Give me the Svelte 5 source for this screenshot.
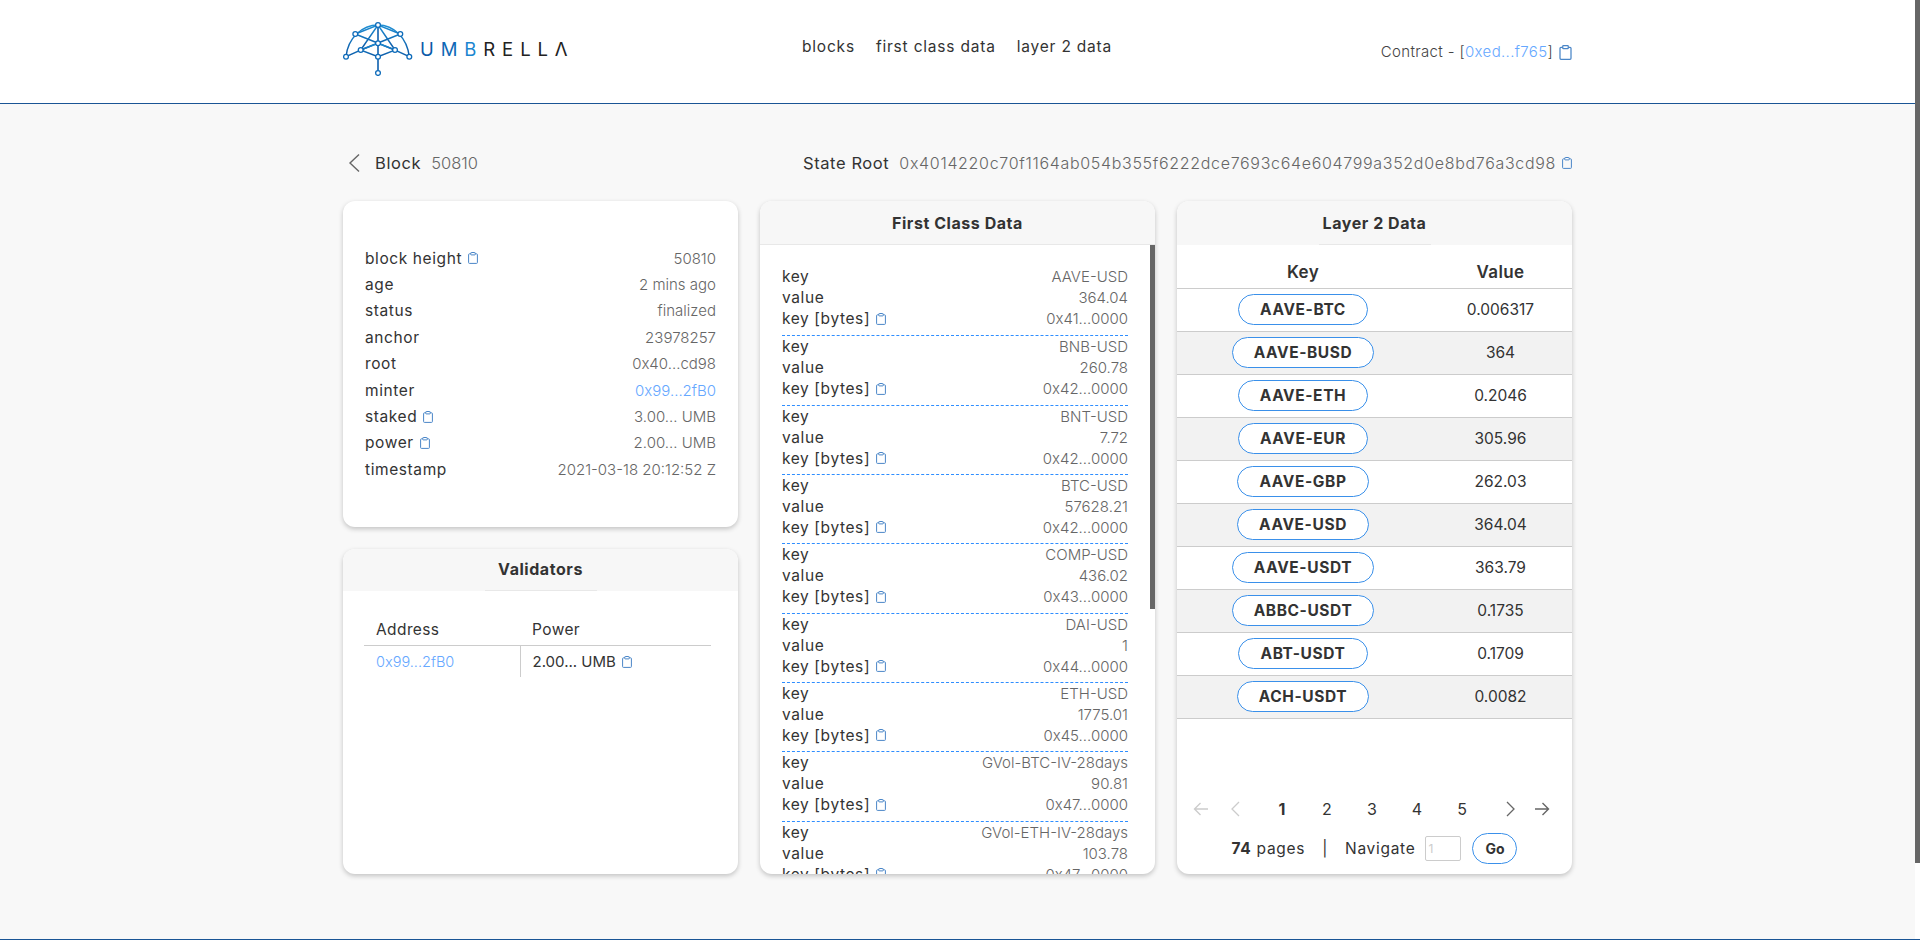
<script>
	const blockRows = [
		{ label: 'block height', value: '50810', copy: true },
		{ label: 'age', value: '2 mins ago' },
		{ label: 'status', value: 'finalized' },
		{ label: 'anchor', value: '23978257' },
		{ label: 'root', value: '0x40...cd98' },
		{ label: 'minter', value: '0x99...2fB0', link: true },
		{ label: 'staked', value: '3.00... UMB', copy: true },
		{ label: 'power', value: '2.00... UMB', copy: true },
		{ label: 'timestamp', value: '2021-03-18 20:12:52 Z' }
	];

	const firstClass = [
		['AAVE-USD', '364.04', '0x41...0000'],
		['BNB-USD', '260.78', '0x42...0000'],
		['BNT-USD', '7.72', '0x42...0000'],
		['BTC-USD', '57628.21', '0x42...0000'],
		['COMP-USD', '436.02', '0x43...0000'],
		['DAI-USD', '1', '0x44...0000'],
		['ETH-USD', '1775.01', '0x45...0000'],
		['GVol-BTC-IV-28days', '90.81', '0x47...0000'],
		['GVol-ETH-IV-28days', '103.78', '0x47...0000']
	];

	const layer2 = [
		['AAVE-BTC', '0.006317'],
		['AAVE-BUSD', '364'],
		['AAVE-ETH', '0.2046'],
		['AAVE-EUR', '305.96'],
		['AAVE-GBP', '262.03'],
		['AAVE-USD', '364.04'],
		['AAVE-USDT', '363.79'],
		['ABBC-USDT', '0.1735'],
		['ABT-USDT', '0.1709'],
		['ACH-USDT', '0.0082']
	];

	const nodes = [
		[378, 25], [355.3, 34], [400.3, 34], [378, 43.3], [360.7, 50],
		[395, 50], [346, 56.7], [409.3, 56.7], [378, 56.7], [378, 73]
	];
</script>

{#snippet copyIcon()}
	<svg class="copy" viewBox="0 0 10 12" width="10" height="12" aria-hidden="true">
		<rect x="0.6" y="1.8" width="8.8" height="9.6" rx="0.8" fill="none" stroke="currentColor" stroke-width="1" />
		<rect x="2.8" y="0.5" width="4.4" height="2.4" rx="0.5" fill="#fff" stroke="currentColor" stroke-width="1" />
	</svg>
{/snippet}

<div class="page">
	<header class="topbar">
		<div class="wrap topbar-inner">
			<a class="logo" href="#top">
				<svg viewBox="343 21 70 55" width="70" height="55" aria-hidden="true">
					<defs>
						<linearGradient id="umb" x1="0" y1="0" x2="0" y2="1">
							<stop offset="0" stop-color="#1f8fd4" />
							<stop offset="1" stop-color="#0a56a4" />
						</linearGradient>
					</defs>
					<g fill="none" stroke="url(#umb)" stroke-width="1.4">
						<path d="M346 56.7C348 38 362 25 378 25C394 25 407 38 409.3 56.7" />
						<path d="M355.3 34L378 25L400.3 34M378 25L360.7 50M378 25L395 50M355.3 34L395 50M400.3 34L360.7 50" />
						<path d="M346 56.7L360.7 50L378 56.7L395 50L409.3 56.7M360.7 50L378 43.3L395 50" />
					</g>
					<path d="M378 25V73" fill="none" stroke="#0d5fae" stroke-width="1.6" />
					{#each nodes as [cx, cy]}
						<circle {cx} {cy} r="2.4" fill="#fff" stroke="#0f6cba" stroke-width="1.3" />
					{/each}
				</svg>
				<span class="wordmark"><span class="w1">U</span><span class="w2">M</span><span class="w3">B</span>RELLΛ</span>
			</a>
			<nav class="nav">
				<a href="#top">blocks</a>
				<a href="#top">first class data</a>
				<a href="#top">layer 2 data</a>
			</nav>
			<div class="contract">
				<span>Contract - [<a href="#top">0xed...f765</a>]</span>
				<span class="copy-big">{@render copyIcon()}</span>
			</div>
		</div>
	</header>

	<main class="wrap content">
		<div class="crumbs">
			<div class="crumb-left">
				<svg viewBox="0 0 12 20" width="12" height="20" aria-hidden="true">
					<path d="M11 1.5L2 10l9 8.5" fill="none" stroke="#666" stroke-width="1.4" />
				</svg>
				<span class="crumb-title">Block</span>
				<span class="crumb-val">50810</span>
			</div>
			<div class="crumb-right">
				<span class="crumb-title">State Root</span>
				<span class="crumb-val hash">0x4014220c70f1164ab054b355f6222dce7693c64e604799a352d0e8bd76a3cd98</span>
				{@render copyIcon()}
			</div>
		</div>

		<div class="columns">
			<div class="stack">
				<section class="card block-card">
					{#each blockRows as row}
						<div class="kv">
							<span class="k">{row.label}{#if row.copy}{@render copyIcon()}{/if}</span>
							<span class="v" class:link={row.link}>{row.value}</span>
						</div>
					{/each}
				</section>

				<section class="card validators">
					<h2 class="card-title short slim">Validators</h2>
					<table class="val-table">
						<thead>
							<tr><th>Address</th><th>Power</th></tr>
						</thead>
						<tbody>
							<tr>
								<td class="link light">0x99...2fB0</td>
								<td>2.00... UMB{@render copyIcon()}</td>
							</tr>
						</tbody>
					</table>
				</section>
			</div>

			<section class="card tall">
				<h2 class="card-title full">First Class Data</h2>
				<div class="scroller">
					{#each firstClass as [key, value, bytes]}
						<div class="entry">
							<div class="line"><span class="k">key</span><span class="v">{key}</span></div>
							<div class="line"><span class="k">value</span><span class="v">{value}</span></div>
							<div class="line"><span class="k">key [bytes]{@render copyIcon()}</span><span class="v">{bytes}</span></div>
						</div>
					{/each}
				</div>
				<div class="list-thumb"></div>
			</section>

			<section class="card tall">
				<h2 class="card-title short">Layer 2 Data</h2>
				<table class="l2-table">
					<thead>
						<tr><th>Key</th><th>Value</th></tr>
					</thead>
					<tbody>
						{#each layer2 as [key, value]}
							<tr>
								<td><span class="pill">{key}</span></td>
								<td>{value}</td>
							</tr>
						{/each}
					</tbody>
				</table>
				<div class="pager">
					<div class="pages">
						<svg class="arrow" viewBox="0 0 16 14" width="16" height="14" aria-hidden="true"><path d="M15 7H1.5M7.5 1L1.5 7l6 6" fill="none" stroke="#ccc" stroke-width="1.4" /></svg>
						<svg class="chev first-chev" viewBox="0 0 10 16" width="10" height="16" aria-hidden="true"><path d="M9 1L2 8l7 7" fill="none" stroke="#ccc" stroke-width="1.3" /></svg>
						<span class="num current">1</span>
						<span class="num">2</span>
						<span class="num">3</span>
						<span class="num">4</span>
						<span class="num">5</span>
						<svg class="chev last-chev" viewBox="0 0 10 16" width="10" height="16" aria-hidden="true"><path d="M1 1l7 7-7 7" fill="none" stroke="#666" stroke-width="1.3" /></svg>
						<svg class="arrow" viewBox="0 0 16 14" width="16" height="14" aria-hidden="true"><path d="M1 7h13.5M8.5 1l6 6-6 6" fill="none" stroke="#666" stroke-width="1.4" /></svg>
					</div>
					<div class="goto">
						<span><b>74</b> pages</span>
						<span class="bar">|</span>
						<span>Navigate</span>
						<input class="page-input" placeholder="1" />
						<button class="go">Go</button>
					</div>
				</div>
			</section>
		</div>
	</main>

	<footer class="bottom"></footer>
	<div class="page-thumb"></div>
</div>

<style>
	:global(body) {
		margin: 0;
		background: #fff;
		font-family: Inter, 'Noto Sans', sans-serif;
		color: #333;
	}

	.page {
		height: 949px;
		overflow: hidden;
		box-sizing: border-box;
		display: flex;
		flex-direction: column;
		background: linear-gradient(to right, #f8f8f8 1915px, #fff 1915px);
	}

	.page-thumb {
		position: fixed;
		top: 0;
		right: 0;
		width: 5px;
		height: 863px;
		background: #666;
	}

	.wrap {
		width: 1229px;
		margin: 0 auto;
		position: relative;
		left: -2.5px;
	}

	a {
		text-decoration: none;
		color: inherit;
	}

	.topbar {
		height: 103px;
		background: #fff;
		border-bottom: 1px solid #1a5595;
		flex: none;
	}

	.topbar-inner {
		display: flex;
		height: 103px;
		align-items: flex-start;
	}

	.logo {
		display: flex;
		width: 459px;
		padding-top: 21px;
	}

	.wordmark {
		margin: 15px 0 0 7px;
		font-size: 18.5px;
		line-height: 26px;
		letter-spacing: 6.9px;
		color: #222;
		white-space: nowrap;
	}

	.w1 { color: #0a5aa8; }
	.w2 { color: #0e68b6; }
	.w3 { color: #1a86d0; }

	.nav {
		display: flex;
		gap: 21px;
		padding-top: 36px;
		font-size: 15.5px;
		letter-spacing: 0.8px;
		line-height: 22px;
	}

	.contract {
		margin-left: auto;
		padding-top: 41px;
		font-size: 15px;
		letter-spacing: 0.35px;
		line-height: 22px;
		font-weight: 300;
		color: #444;
		display: flex;
		align-items: center;
		white-space: nowrap;
	}

	.contract a {
		color: #66a8ff;
	}

	.copy-big {
		display: inline-flex;
	}

	.copy-big :global(svg) {
		width: 13px;
		height: 15px;
	}

	.copy {
		color: #4a86c8;
		margin-left: 6px;
		vertical-align: -1px;
		flex: none;
	}

	.content {
		flex: 1;
	}

	.crumbs {
		display: flex;
		justify-content: space-between;
		align-items: center;
		height: 22px;
		margin-top: 48px;
	}

	.crumb-left,
	.crumb-right {
		display: flex;
		align-items: center;
	}

	.crumb-left svg {
		margin: 0 15px 0 5px;
	}

	.crumb-title {
		font-size: 16.5px;
		letter-spacing: 0.6px;
		color: #333;
	}

	.crumb-val {
		font-size: 16.5px;
		font-weight: 300;
		color: #666;
		margin-left: 10px;
	}

	.hash {
		font-size: 16px;
		letter-spacing: 0.68px;
	}

	.columns {
		display: grid;
		grid-template-columns: repeat(3, 395px);
		gap: 22px;
		margin-top: 27px;
		height: 673px;
	}

	.stack {
		display: flex;
		flex-direction: column;
		gap: 22px;
		min-height: 0;
	}

	.card {
		background: #fff;
		border-radius: 12px;
		box-shadow: 0 2px 5px rgba(0, 0, 0, 0.22);
		overflow: hidden;
		display: flex;
		flex-direction: column;
		min-height: 0;
		position: relative;
	}

	.block-card {
		height: 326px;
		flex: none;
		padding: 44px 22px;
		box-sizing: border-box;
	}

	.kv,
	.line {
		display: flex;
		justify-content: space-between;
		align-items: center;
	}

	.kv {
		height: 26.4px;
	}

	.line {
		height: 21px;
	}

	.k {
		white-space: nowrap;
		display: flex;
		align-items: center;
		font-size: 15.5px;
		letter-spacing: 0.6px;
	}

	.v {
		font-weight: 300;
		color: #666;
		white-space: nowrap;
		font-size: 15px;
	}

	.v.link,
	.link {
		color: #66a8ff;
	}

	.light {
		font-weight: 300;
	}

	.card-title {
		margin: 0;
		text-align: center;
		background: #f7f7f7;
		font-size: 16px;
		letter-spacing: 0.55px;
		font-weight: 700;
		color: #333;
		line-height: 21px;
		padding-top: 12px;
		height: 44px;
		box-sizing: border-box;
		flex: none;
		position: relative;
	}

	.card-title.slim {
		height: 42px;
		padding-top: 10px;
	}

	.card-title.full {
		border-bottom: 1px solid #e8e8e8;
	}

	.card-title.short::after {
		content: '';
		position: absolute;
		bottom: 0;
		left: 50%;
		width: 112px;
		margin-left: -56px;
		height: 1px;
		background: #e8e8e8;
	}

	.validators {
		flex: 1;
	}

	.val-table {
		border-collapse: collapse;
		width: 347px;
		margin: 22px 0 0 21px;
		font-size: 15.5px;
		letter-spacing: 0.4px;
		table-layout: fixed;
	}

	.val-table th {
		font-weight: 400;
		text-align: left;
		padding: 0 12px;
		height: 32px;
		border-bottom: 1px solid #ccc;
	}

	.val-table td {
		height: 31px;
		padding: 0 12px;
		letter-spacing: 0;
		font-size: 15px;
	}

	.val-table th:first-child,
	.val-table td:first-child {
		width: 156px;
		box-sizing: border-box;
	}

	.val-table td:first-child {
		border-right: 1px solid #ccc;
		font-size: 14.5px;
	}

	.scroller {
		flex: 1;
		overflow: hidden;
		padding: 21px 27px 0 22px;
		min-height: 0;
	}

	.list-thumb {
		position: absolute;
		top: 44px;
		right: 0;
		width: 5px;
		height: 364px;
		background: #666;
	}

	.entry {
		height: 69.33px;
		box-sizing: border-box;
	}

	.entry + .entry {
		border-top: 1px dashed #2f8eff;
	}

	.l2-table {
		border-collapse: collapse;
		width: 100%;
		table-layout: fixed;
		font-size: 15.5px;
	}

	.l2-table th {
		height: 43px;
		font-size: 17px;
		letter-spacing: 0.4px;
		font-weight: 600;
		border-bottom: 1px solid #ccc;
		box-sizing: border-box;
		padding-top: 12px;
	}

	.l2-table th:first-child {
		width: 252px;
	}

	.l2-table td {
		height: 43px;
		padding: 0;
		text-align: center;
		border-bottom: 1px solid #ccc;
		box-sizing: border-box;
	}

	.l2-table tbody tr:nth-child(even) {
		background: #f2f2f2;
	}

	.pill {
		display: inline-block;
		height: 31px;
		line-height: 29px;
		box-sizing: border-box;
		border: 1px solid #3a90ea;
		border-radius: 15.5px;
		padding: 0 21px;
		background: #fff;
		font-weight: 700;
		font-size: 15.5px;
		letter-spacing: 0.6px;
	}

	.pager {
		margin-top: auto;
		padding-bottom: 10px;
	}

	.pages {
		display: flex;
		align-items: center;
		padding-left: 16px;
		height: 24px;
		font-size: 16px;
		position: relative;
		top: 1px;
	}

	.first-chev {
		margin-left: 21px;
	}

	.num {
		width: 45px;
		text-align: center;
	}

	.num:nth-of-type(1) {
		margin-left: 19.5px;
	}

	.current {
		font-weight: 700;
	}

	.last-chev {
		margin: 0 18px 0 21px;
	}

	.goto {
		display: flex;
		align-items: center;
		justify-content: center;
		margin-top: 13px;
		height: 31px;
		font-size: 15.5px;
		letter-spacing: 0.7px;
	}

	.bar {
		margin: 0 17px;
	}

	.page-input {
		width: 36px;
		height: 25px;
		box-sizing: border-box;
		margin: 0 11px 0 10px;
		padding: 0 2px;
		border: 1px solid #ccc;
		border-radius: 2px;
		font-size: 12px;
		font-family: inherit;
	}

	.page-input::placeholder {
		color: #ccc;
	}

	.go {
		width: 45px;
		height: 31px;
		box-sizing: border-box;
		border: 1px solid #3a90ea;
		border-radius: 15.5px;
		background: #fff;
		font-family: inherit;
		font-weight: 700;
		font-size: 14px;
		color: #333;
		padding: 0;
	}

	.bottom {
		flex: none;
		height: 9px;
		background: #fff;
		border-top: 1px solid #1a5595;
	}
</style>
